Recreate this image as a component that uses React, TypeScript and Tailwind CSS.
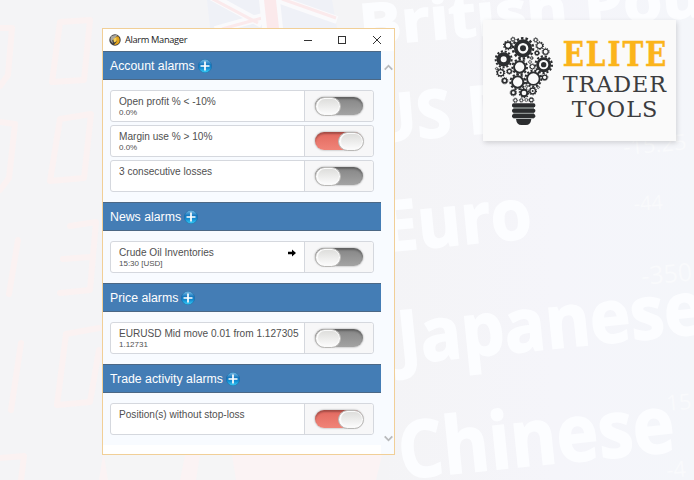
import React from "react";

const INK = "#2b2d2f";

type GearProps = { x: number; y: number; r: number; hole: number; teeth?: number; dot?: number };

function Gear({ x, y, r, hole, teeth = 10, dot = 0 }: GearProps) {
  const inner = r * 0.8;
  const body = (inner + hole) / 2;
  return (
    <g transform={`translate(${x} ${y})`} stroke={INK} fill="none">
      <circle r={body} strokeWidth={inner - hole} />
      <circle
        r={(r + inner) / 2 - 0.3}
        strokeWidth={r - inner + 0.6}
        pathLength={teeth * 2}
        strokeDasharray="1.1 0.9"
      />
      {dot > 0 && <circle r={dot} fill={INK} stroke="none" />}
    </g>
  );
}

const gears: GearProps[] = [
  { x: 141, y: 115, r: 34, hole: 16, teeth: 14, dot: 9 },
  { x: 83, y: 148, r: 27, hole: 9, teeth: 13 },
  { x: 203, y: 164, r: 28, hole: 14, teeth: 13, dot: 8 },
  { x: 131, y: 171, r: 25, hole: 14, teeth: 11 },
  { x: 172, y: 206, r: 27, hole: 16, teeth: 13 },
  { x: 125, y: 216, r: 25, hole: 14, teeth: 11 },
  { x: 96, y: 106, r: 15, hole: 7 },
  { x: 191, y: 107, r: 13, hole: 7 },
  { x: 209, y: 125, r: 12, hole: 6 },
  { x: 183, y: 129, r: 9, hole: 3 },
  { x: 167, y: 144, r: 6, hole: 2, teeth: 8 },
  { x: 74, y: 188, r: 14, hole: 7.5, dot: 3 },
  { x: 100, y: 184, r: 10, hole: 4 },
  { x: 86, y: 212, r: 11, hole: 4 },
  { x: 206, y: 202, r: 11, hole: 5 },
  { x: 112, y: 248, r: 11, hole: 4 },
  { x: 144, y: 249, r: 16, hole: 7 },
  { x: 170, y: 243, r: 13, hole: 6.5, dot: 3 },
  { x: 111, y: 88, r: 8, hole: 3.5, teeth: 8 },
  { x: 179, y: 90, r: 8, hole: 3.5, teeth: 8 },
  { x: 169, y: 170, r: 10, hole: 5 },
  { x: 162, y: 156, r: 6, hole: 3, teeth: 8 },
  { x: 62, y: 176, r: 5, hole: 2, teeth: 7 },
  { x: 187, y: 232, r: 5, hole: 2, teeth: 7 },
  { x: 152, y: 229, r: 5, hole: 2, teeth: 7 },
  { x: 118, y: 271, r: 8, hole: 3.5, teeth: 8 },
  { x: 136, y: 271, r: 7, hole: 3, teeth: 8 },
  { x: 151, y: 270, r: 6, hole: 3, teeth: 8 },
  { x: 166, y: 270, r: 9, hole: 4, teeth: 8 },
];

function Logo() {
  return (
    <div className="absolute left-[483px] top-5 h-[121px] w-[193px] bg-[#fafafa] shadow-[1px_2px_5px_rgba(0,0,0,0.15)]">
      <svg className="block h-full w-full" viewBox="21 30 579 363">
        {gears.map((g, i) => (
          <Gear key={i} {...g} />
        ))}
        <rect x="112" y="284" width="62" height="42" fill="#8d9392" />
        <rect x="108" y="280" width="70" height="12" rx="5" fill={INK} />
        <rect x="108" y="296" width="70" height="12" rx="5" fill={INK} />
        <rect x="108" y="312" width="70" height="12" rx="5" fill={INK} />
        <path d="M120 327h46q-2 18-16 18h-14q-14 0-16-18z" fill={INK} />
        <g fontFamily="'DejaVu Serif', serif">
          <text x="260" y="167" fontSize="101" fontWeight="700" fill="#fbb41b" stroke="#fbb41b" strokeWidth="1.5" letterSpacing="7" textLength="317" lengthAdjust="spacingAndGlyphs">ELITE</text>
          <text x="260" y="245" fontSize="69" fill="#3c3d3f" letterSpacing="3" textLength="313" lengthAdjust="spacingAndGlyphs">TRADER</text>
          <text x="287" y="322" fontSize="69" fill="#3c3d3f" letterSpacing="3" textLength="260" lengthAdjust="spacingAndGlyphs">TOOLS</text>
        </g>
      </svg>
    </div>
  );
}

function Backdrop() {
  return (
    <svg className="absolute inset-0 h-full w-full" viewBox="0 0 694 480">
      <defs>
        <linearGradient id="page" x1="0" x2="1">
          <stop offset="0" stopColor="#f4f4f6" />
          <stop offset="0.55" stopColor="#f4f4f6" />
          <stop offset="0.8" stopColor="#f5f5fa" />
          <stop offset="1" stopColor="#f4f6fa" />
        </linearGradient>
      </defs>
      <rect width="694" height="480" fill="url(#page)" />
      <path d="M207 0H332L337 28H210z" fill="#eff1f7" />
      <path d="M207 -6L262 24M337 20L272 -3M215 30L266 16" stroke="#fafafc" strokeWidth="8" />
      <path d="M209 -3L258 23M336 18L282 -1M222 29L262 18" stroke="#fbeaec" strokeWidth="3" />
      <path d="M259 0H280L283 28H262z" fill="#fafafc" />
      <path d="M264 0H276L279 28H267z" fill="#fbe9eb" />
      <path d="M103 455H382L376 480H99z" fill="#fbf3f4" />
      <path d="M104 455H185L180 480H108zM200 455H232L236 480H196z" fill="#f5f5f6" />
      <g fill="none" stroke="#fbf2f2" strokeWidth="6" strokeLinejoin="round" strokeLinecap="round">
        <path d="M60 22L90 20L84 80L52 82z" />
        <path d="M0 28L12 28L8 75L0 86" />
        <path d="M60 119L91 114L84 178L50 181z" />
        <path d="M0 122L15 124L9 178L0 190" />
        <path d="M70 226L96 222L90 290L60 293M63 259L90 257" />
        <path d="M18 240L9 294" />
        <path d="M66 334L99 328M66 334L57 405L90 402L99 350" />
        <path d="M21 343L11 410" />
        <path d="M0 458L24 456L21 480" />
      </g>
      <g fill="#fcfdff" stroke="#fcfdff" strokeWidth="1.6" fontFamily="'Open Sans', 'Noto Sans', sans-serif" fontWeight="700">
        <text transform="translate(361 46) rotate(-5)" fontSize="58" textLength="345" lengthAdjust="spacingAndGlyphs">British Pou</text>
        <text transform="translate(371 143) rotate(-5)" fontSize="66" textLength="145" lengthAdjust="spacingAndGlyphs">US D</text>
        <text transform="translate(383 252) rotate(-5.5)" fontSize="70" textLength="151" lengthAdjust="spacingAndGlyphs">Euro</text>
        <text transform="translate(400 364) rotate(-5.8)" fontSize="74" textLength="308" lengthAdjust="spacingAndGlyphs">Japanese</text>
        <text transform="translate(401 479) rotate(-5.8)" fontSize="79" textLength="277" lengthAdjust="spacingAndGlyphs">Chinese</text>
      </g>
      <g fill="#f9fafc" fontFamily="'Open Sans', sans-serif">
        <text transform="translate(624 155) rotate(-5)" fontSize="22">-15.25</text>
        <text transform="translate(634 211) rotate(-4)" fontSize="20">-44</text>
        <text transform="translate(642 285) rotate(-5)" fontSize="25">-350</text>
        <text transform="translate(667 411) rotate(-5)" fontSize="22">15</text>
        <text transform="translate(667 478) rotate(-5)" fontSize="22">-4</text>
      </g>
    </svg>
  );
}

function PlusBadge() {
  return (
    <svg className="size-[14px] shrink-0" viewBox="0 0 14 14">
      <defs>
        <linearGradient id="badge" x1="0" y1="0" x2="0" y2="1">
          <stop offset="0" stopColor="#7dbfe6" />
          <stop offset="0.4" stopColor="#1478c0" />
          <stop offset="0.65" stopColor="#128bd0" />
          <stop offset="1" stopColor="#3bd2fa" />
        </linearGradient>
      </defs>
      <circle cx="7" cy="7" r="6.7" fill="url(#badge)" stroke="#1a649f" strokeWidth="0.5" />
      <path d="M7 2.5V11.5M2.5 7H11.5" stroke="#fff" strokeWidth="1.7" />
    </svg>
  );
}

function Toggle({ on = false }: { on?: boolean }) {
  return (
    <span
      className={
        "flex h-[18px] w-[48px] items-center rounded-full shadow-[inset_0_2px_2px_rgba(0,0,0,0.28),0_0_2px_#888] " +
        (on
          ? "justify-end bg-linear-to-b from-[#e2685f] to-[#f08478]"
          : "justify-start bg-linear-to-b from-[#858585] to-[#a3a3a3]")
      }
    >
      <span
        className={
          "flex h-[19px] w-[26px] shrink-0 items-center justify-center rounded-full border border-[#b9b8b6] bg-[#fafafa] " +
          (on ? "-mr-px" : "")
        }
      >
        <span className="h-[14px] w-[21px] rounded-full bg-linear-to-b from-[#dededc] to-[#f9f9f9]" />
      </span>
    </span>
  );
}

type Alarm = { title: string; detail?: string; on?: boolean; arrow?: boolean };

function AlarmRow({ title, detail, on, arrow }: Alarm) {
  return (
    <div className="flex h-8 w-[264px] rounded-[3px] border border-[#d5d8de] bg-white">
      <div className="flex min-w-0 flex-1 justify-between whitespace-nowrap pl-2 pr-[5px] pt-[5px]">
        <div className="text-[#505050]">
          <div className="h-[12px] text-[10.1px] leading-[12px]">{title}</div>
          <div className="text-[8px] leading-[9px]">{detail}</div>
        </div>
        {arrow && (
          <svg className="mr-[3px] mt-[2px] h-[8px] w-[8px]" viewBox="0 0 8 8">
            <path d="M0 2.8H4V.5L8 4L4 7.5V5.2H0z" fill="#000" />
          </svg>
        )}
      </div>
      <div className="flex w-[69px] shrink-0 items-center justify-center rounded-r-[3px] border-l border-[#d5d8de] bg-[#f7f7f8]">
        <Toggle on={on} />
      </div>
    </div>
  );
}

const sections: { name: string; alarms: Alarm[] }[] = [
  {
    name: "Account alarms",
    alarms: [
      { title: "Open profit % < -10%", detail: "0.0%" },
      { title: "Margin use % > 10%", detail: "0.0%", on: true },
      { title: "3 consecutive losses" },
    ],
  },
  { name: "News alarms", alarms: [{ title: "Crude Oil Inventories", detail: "15:30 [USD]", arrow: true }] },
  { name: "Price alarms", alarms: [{ title: "EURUSD Mid move 0.01 from 1.127305", detail: "1.12731" }] },
  { name: "Trade activity alarms", alarms: [{ title: "Position(s) without stop-loss", on: true }] },
];

function AlarmWindow() {
  return (
    <div className="absolute left-[102px] top-[28px] flex h-[427px] w-[293px] flex-col border border-[#f1cf97] bg-white font-['Liberation_Sans',Arial,sans-serif]">
      <div className="flex h-[22px] shrink-0 items-center justify-between pl-[6px] pr-[13px]">
        <div className="flex items-center gap-[4px]">
          <svg className="size-[12px]" viewBox="0 0 12 12">
            <circle cx="6" cy="6" r="5.7" fill="#3d3d40" />
            <path d="M2 2.6Q5 .2 8.5 1.3L6 4.5L3.2 6.3L4 9.5Q.3 7 2 2.6z" fill="#a9a7a0" />
            <path d="M6.2 3L9.2 2.2Q11.6 5 10.5 8.2Q8.5 11.5 5 10.8L7.8 7.5z" fill="#e4a51d" />
            <path d="M4.3 4.8L7.3 3.4L7.6 7.2L5 8.6z" fill="#f8d257" />
          </svg>
          <span className="whitespace-nowrap font-['Open_Sans','Noto_Sans',sans-serif] text-[9.3px] leading-3 tracking-[-0.35px] text-[#222]">Alarm Manager</span>
        </div>
        <svg className="h-[10px] w-[78px]" viewBox="0 0 78 10" fill="none" stroke="#333">
          <path d="M1 5.5H9" />
          <rect x="35.5" y="1.5" width="7" height="7" />
          <path d="M70 1L78 9M78 1L70 9" />
        </svg>
      </div>
      <div className="flex flex-1 bg-[#f8fbff]">
        <div className="flex w-[278px] flex-col">
          {sections.map((s) => (
            <section key={s.name} className="flex flex-col">
              <h2 className="flex h-[29px] items-center gap-[3px] border-y border-[#4c6885] bg-[#447db5] pl-[7px] text-[12.3px] leading-4 text-white">
                {s.name}
                <PlusBadge />
              </h2>
              <div className="flex flex-col gap-[3px] pb-[10px] pl-[7px] pt-[10px]">
                {s.alarms.map((a) => (
                  <AlarmRow key={a.title} {...a} />
                ))}
              </div>
            </section>
          ))}
          <div className="flex-1 bg-white" />
        </div>
        <div className="flex flex-1 flex-col items-center justify-between pb-[12px] pl-px pt-[13px]">
          <svg className="h-[7px] w-[9px]" viewBox="0 0 9 7">
            <path d="M.7 5.7L4.5 1.7L8.3 5.7" fill="none" stroke="#b9babc" strokeWidth="1.8" />
          </svg>
          <svg className="h-[7px] w-[9px]" viewBox="0 0 9 7">
            <path d="M.7 1.3L4.5 5.3L8.3 1.3" fill="none" stroke="#b9babc" strokeWidth="1.8" />
          </svg>
        </div>
      </div>
    </div>
  );
}

export default function App() {
  return (
    <main className="relative h-[480px] w-[694px] overflow-hidden">
      <Backdrop />
      <AlarmWindow />
      <Logo />
    </main>
  );
}
